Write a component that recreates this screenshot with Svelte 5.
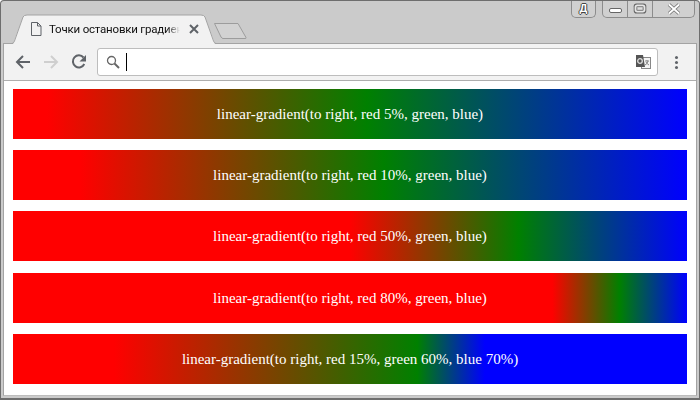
<script>
  const bars = [
    'linear-gradient(to right, red 5%, green, blue)',
    'linear-gradient(to right, red 10%, green, blue)',
    'linear-gradient(to right, red 50%, green, blue)',
    'linear-gradient(to right, red 80%, green, blue)',
    'linear-gradient(to right, red 15%, green 60%, blue 70%)'
  ];
</script>

<div class="window">
  <div class="strip">
    <div class="tab">
      <svg class="tab-shape" width="208" height="30" viewBox="0 0 208 30">
        <path d="M2 30 L12 3 Q13 1 16 1 H190 Q193 1 194 3 L204 30 Z" fill="#f2f2f2" />
        <path d="M0 29.500 H1 Q2.500 29.500 3.500 27 L12 3 Q13 1 16 1 H190 Q193 1 194 3 L202.500 27 Q203.500 29.500 205 29.500 H208" fill="none" stroke="#a3a3a3" />
      </svg>
      <svg class="doc" width="12" height="14" viewBox="0 0 12 14">
        <path d="M1.5 .5 H7.5 L11 4 V13.5 H1.5 Z M7.5 .5 V4 H11" fill="none" stroke="#5f6368" />
      </svg>
      <span class="tab-title">Точки остановки градиен</span>
      <svg class="tab-close" width="10" height="10" viewBox="0 0 10 10">
        <path d="M1 1 L9 9 M9 1 L1 9" stroke="#5f6368" stroke-width="2" />
      </svg>
    </div>
    <svg class="newtab" width="36" height="18" viewBox="0 0 36 18">
      <path d="M2.5 1.5 H26 L34 15.5 Q34.500 16.500 33 16.500 H11 Q10 16.500 9 15 Z" fill="#d2d2d2" stroke="#9c9c9c" />
    </svg>
    <div class="controls">
      <div class="ctl-group user"><span class="user-glyph">Д</span></div>
      <div class="ctl-group">
        <div class="ctl min"><i></i></div>
        <div class="ctl max"><i></i></div>
        <div class="ctl close">
          <svg width="20" height="12" viewBox="0 0 20 12">
            <path d="M5 1.500 L15 10.500 M15 1.500 L5 10.500" stroke="#777" stroke-width="3.600" />
            <path d="M5 1.500 L15 10.500 M15 1.500 L5 10.500" stroke="#fff" stroke-width="1.800" />
          </svg>
        </div>
      </div>
    </div>
  </div>

  <div class="body">
    <div class="toolbar">
      <svg width="16" height="16" viewBox="0 0 16 16">
        <path d="M15 8 H2.500 M8 2 L2 8 L8 14" fill="none" stroke="#5f6368" stroke-width="2" />
      </svg>
      <svg width="16" height="16" viewBox="0 0 16 16">
        <path d="M1 8 H13.500 M8 2 L14 8 L8 14" fill="none" stroke="#cfcfcf" stroke-width="2" />
      </svg>
      <svg width="16" height="16" viewBox="0 0 16 16">
        <path d="M13.300 10 A6 6 0 1 1 12.500 3.500" fill="none" stroke="#5f6368" stroke-width="2" />
        <path d="M15 1 V7.500 H8.500 Z" fill="#5f6368" />
      </svg>
      <div class="omnibox">
        <svg class="search" width="14" height="14" viewBox="0 0 14 14">
          <circle cx="5.500" cy="5.500" r="4" fill="none" stroke="#666" stroke-width="1.300" />
          <path d="M8.500 8.500 L13 13" stroke="#666" stroke-width="2" />
        </svg>
        <span class="caret"></span>
        <svg class="translate" width="16" height="16" viewBox="0 0 16 16">
          <rect x="6.500" y="3.500" width="9" height="11" fill="#f4f4f4" stroke="#888" />
          <path d="M1 1 H8 L10 13 H1 Z" fill="#555" />
          <circle cx="5" cy="7" r="2.300" fill="none" stroke="#ddd" stroke-width="1.300" />
          <path d="M10 7 H14 M12 6 V7 M13 7 Q12.500 10 10 11 M11 8 Q12 10 14 11" fill="none" stroke="#888" />
        </svg>
      </div>
      <div class="menu"><b></b><b></b><b></b></div>
    </div>

    <div class="page">
      {#each bars as bar}
        <div class="bar" style="background: {bar}">{bar}</div>
      {/each}
    </div>
  </div>
</div>

<style>
  :global(body) {
    margin: 0;
    background: #fff;
  }

  .window {
    box-sizing: border-box;
    width: 700px;
    height: 400px;
    display: flex;
    flex-direction: column;
    padding: 0 2px 2px;
    background: #cbcbcb;
    border: 1px solid #6e6e6e;
    border-bottom-width: 2px;
    border-radius: 4px 4px 0 0;
    overflow: hidden;
  }

  .strip {
    display: flex;
    height: 42px;
    flex: none;
    box-sizing: border-box;
    padding-left: 8px;
    position: relative;
    z-index: 1;
  }

  .tab {
    position: relative;
    width: 208px;
    height: 30px;
    margin-top: 13px;
    flex: none;
    display: flex;
    align-items: center;
    padding-left: 19px;
    box-sizing: border-box;
  }

  .tab-shape {
    position: absolute;
    left: 0;
    top: 0;
  }

  .doc,
  .tab-title,
  .tab-close {
    position: relative;
  }

  .tab-title {
    width: 131px;
    flex: none;
    margin-left: 7px;
    white-space: nowrap;
    font: 11.5px Roboto, sans-serif;
    letter-spacing: -0.2px;
    color: #111;
    -webkit-mask-image: linear-gradient(to right, #000 90%, transparent);
    mask-image: linear-gradient(to right, #000 90%, transparent);
  }

  .tab-close {
    margin-left: 9px;
  }

  .newtab {
    margin: 21px 0 0 -7px;
    flex: none;
  }

  .controls {
    margin-left: auto;
    display: flex;
    align-items: flex-start;
    gap: 6px;
    padding-right: 2px;
    margin-top: -1px;
  }

  .ctl-group {
    height: 17px;
    display: flex;
    border: 1px solid #8c8c8c;
    border-top: 0;
    border-radius: 0 0 5px 5px;
    background: #d0d0d0;
  }

  .user {
    width: 23px;
    justify-content: center;
  }

  .user-glyph {
    font: bold 11px/16px "Liberation Sans", sans-serif;
    color: #fff;
    text-shadow: 1px 0 #444, -1px 0 #444, 0 1px #444, 0 -1px #444;
  }

  .ctl {
    height: 17px;
    display: flex;
    align-items: center;
    justify-content: center;
    border-left: 1px solid #8c8c8c;
  }

  .min {
    width: 24px;
    border-left: 0;
  }

  .min i {
    width: 11px;
    height: 3px;
    margin-top: 4px;
    background: #fff;
    border: 1px solid #666;
    border-radius: 2px;
  }

  .max {
    width: 24px;
  }

  .max i {
    width: 6px;
    height: 3px;
    background: #ddd;
    border: 1px solid #666;
    outline: 2px solid #e6e6e6;
    box-shadow: 0 0 0 3px #666;
    border-radius: 1px;
    transform: scale(0.9);
  }

  .close {
    flex: 1;
    width: 41px;
  }

  .body {
    flex: 1;
    display: flex;
    flex-direction: column;
    min-height: 0;
    border: 1px solid #a3a3a3;
    border-bottom-color: #bdbdbd;
    background: #fff;
  }

  .toolbar {
    height: 37px;
    flex: none;
    box-sizing: border-box;
    display: flex;
    align-items: center;
    gap: 12px;
    padding: 0 0 0 11px;
    background: #f2f2f2;
    border-bottom: 1px solid #aeaeae;
  }

  .omnibox {
    width: 561px;
    height: 28px;
    box-sizing: border-box;
    margin-left: -2px;
    display: flex;
    align-items: center;
    padding: 0 6px 0 8px;
    background: #fff;
    border: 1px solid #bdbdbd;
    border-radius: 3px;
  }

  .caret {
    width: 1px;
    height: 18px;
    margin-left: 6px;
    background: #000;
  }

  .translate {
    margin-left: auto;
  }

  .menu {
    margin-left: 5px;
    display: flex;
    flex-direction: column;
    gap: 2px;
  }

  .menu b {
    width: 3px;
    height: 3px;
    border-radius: 50%;
    background: #5f6368;
  }

  .page {
    flex: 1;
    padding: 8px 9px 0 9px;
  }

  .bar {
    height: 50px;
    margin-bottom: 11.2px;
    color: #fff;
    font: 15px/50px "Liberation Serif", serif;
    text-align: center;
  }
</style>
